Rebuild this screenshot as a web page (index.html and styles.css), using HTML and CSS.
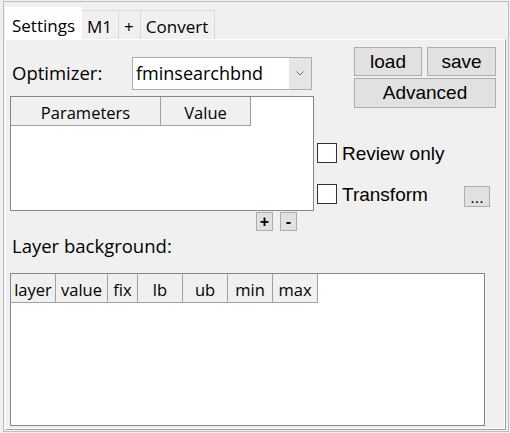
FILE: index.html
```
<!DOCTYPE html>
<html>
<head>
<meta charset="utf-8">
<link rel="stylesheet" href="styles.css">
</head>
<body>
<div class="window">
  <div class="tabs">
    <div class="tab active">Settings</div>
    <div class="tab">M1</div>
    <div class="tab">+</div>
    <div class="tab">Convert</div>
  </div>
  <div class="panel">
    <div class="top">
      <div class="left">
        <div class="opt-row">
          <span class="label opt-label">Optimizer:</span>
          <div class="select">
            <span class="select-text">fminsearchbnd</span>
            <span class="arrow"><svg width="8" height="5" viewBox="0 0 8 5"><polyline points="0.5,0.5 4,4 7.5,0.5" fill="none" stroke="#707070" stroke-width="1"/></svg></span>
          </div>
        </div>
        <div class="list params">
          <div class="head">
            <div class="hcell w-param">Parameters</div>
            <div class="hcell w-value">Value</div>
          </div>
        </div>
        <div class="pm">
          <button class="btn small">+</button>
          <button class="btn small">-</button>
        </div>
      </div>
      <div class="right">
        <div class="btns">
          <button class="btn b-load">load</button>
          <button class="btn b-save">save</button>
          <button class="btn b-adv">Advanced</button>
        </div>
        <div class="check first"><span class="box"></span><span class="ctext">Review only</span></div>
        <div class="check second"><span class="box"></span><span class="ctext">Transform</span><button class="btn dots">...</button></div>
      </div>
    </div>
    <div class="label layer-label">Layer background:</div>
    <div class="list layers">
      <div class="head">
        <div class="hcell c-layer">layer</div>
        <div class="hcell c-value">value</div>
        <div class="hcell c-fix">fix</div>
        <div class="hcell c-lb">lb</div>
        <div class="hcell c-ub">ub</div>
        <div class="hcell c-min">min</div>
        <div class="hcell c-max">max</div>
      </div>
    </div>
  </div>
</div>
</body>
</html>
```
FILE: styles.css
```
* { box-sizing: border-box; }
html, body { margin: 0; padding: 0; }
body {
  background: #f0f0f0;
  width: 510px;
  height: 433px;
  overflow: hidden;
  font-family: "Open Sans", "Noto Sans", sans-serif;
  color: #000;
}
.window {
  margin: 1px 1px 0 3px;
  width: 506px;
  height: 431px;
  border: 1px solid #bdbdbd;
  display: flex;
  flex-direction: column;
}
.tabs {
  display: flex;
  align-items: flex-end;
  height: 37px;
  padding-left: 1px;
}
.tab {
  height: 29px;
  padding: 0 6px 0 5px;
  font-size: 17px;
  line-height: 31px;
  border: 1px solid #d9d9d9;
  border-bottom: none;
  border-left: none;
  background: #f0f0f0;
}
.tab.active {
  height: 32px;
  padding: 0 7px;
  line-height: 37px;
  background: #ffffff;
  border: none;
}
.panel {
  flex: 1;
  margin: 0 2px 1px 1px;
  border: 1px solid;
  border-color: #ffffff #a0a0a0 #a0a0a0 #ffffff;
  box-shadow: inset -1px -1px 0 #ffffff;
  padding: 0 0 0 4px;
}
.top {
  display: flex;
  gap: 3px;
}
.left {
  width: 304px;
  padding-top: 17px;
}
.label {
  font-size: 18.5px;
}
.opt-row {
  display: flex;
  height: 33px;
  align-items: center;
}
.opt-label {
  width: 122px;
  padding-left: 2px;
  line-height: 30px;
  padding-bottom: 2px;
}
.select {
  width: 180px;
  height: 33px;
  border: 1px solid #adadad;
  background: #fff;
  display: flex;
}
.select-text {
  flex: 1;
  font-size: 18px;
  line-height: 31px;
  padding-left: 3px;
}
.arrow {
  width: 22px;
  background: #e5e5e5;
  display: flex;
  align-items: center;
  justify-content: center;
}
.list {
  background: #fff;
  border: 1px solid #828790;
}
.params {
  margin-top: 6px;
  height: 115px;
}
.head {
  display: flex;
  height: 29px;
}
.hcell {
  background: #f0f0f0;
  border-right: 1px solid #a0a0a0;
  border-bottom: 1px solid #a0a0a0;
  font-size: 16.5px;
  line-height: 31px;
  text-align: center;
  white-space: nowrap;
  overflow: hidden;
}
.w-param { width: 150px; }
.w-value { width: 90px; }
.pm {
  display: flex;
  justify-content: flex-end;
  gap: 7px;
  padding-right: 17px;
  margin-top: 1px;
}
.btn {
  font-family: "Liberation Sans", Arial, sans-serif;
  background: #e1e1e1;
  border: 1px solid #adadad;
  color: #000;
  padding: 0;
  margin: 0;
  font-size: 19px;
  line-height: 1;
}
.btn.small {
  width: 17px;
  height: 19px;
  font-weight: bold;
  font-size: 16px;
  line-height: 16px;
}
.right {
  width: 180px;
  padding-top: 7px;
}
.btns {
  display: flex;
  flex-wrap: wrap;
  padding-left: 37px;
  column-gap: 5px;
  row-gap: 2px;
}
.b-load { width: 68px; height: 29px; padding-bottom: 1px; }
.b-save { width: 69px; height: 29px; padding-bottom: 1px; }
.b-adv { width: 142px; height: 30px; padding-bottom: 2px; }
.check {
  display: flex;
  align-items: flex-start;
  font-family: "Liberation Sans", Arial, sans-serif;
  font-size: 19px;
}
.check.first { margin-top: 35px; }
.check.second { margin-top: 19px; }
.box {
  width: 20px;
  height: 20px;
  border: 1px solid #333333;
  background: #fff;
  margin-right: 5px;
  flex: none;
}
.ctext {
  line-height: 22px;
}
.dots {
  margin-left: auto;
  margin-right: 7px;
  margin-top: 2px;
  width: 26px;
  height: 21px;
  font-size: 16px;
  line-height: 14px;
  padding-top: 3px;
}
.layer-label {
  margin-top: 2px;
  padding-left: 2px;
  line-height: 26px;
}
.layers {
  margin-top: 14px;
  width: 475px;
  height: 153px;
}
.c-layer { width: 45px; }
.c-value { width: 52px; }
.c-fix { width: 30px; }
.c-lb { width: 45px; }
.c-ub { width: 45px; }
.c-min { width: 45px; }
.c-max { width: 45px; }
```
